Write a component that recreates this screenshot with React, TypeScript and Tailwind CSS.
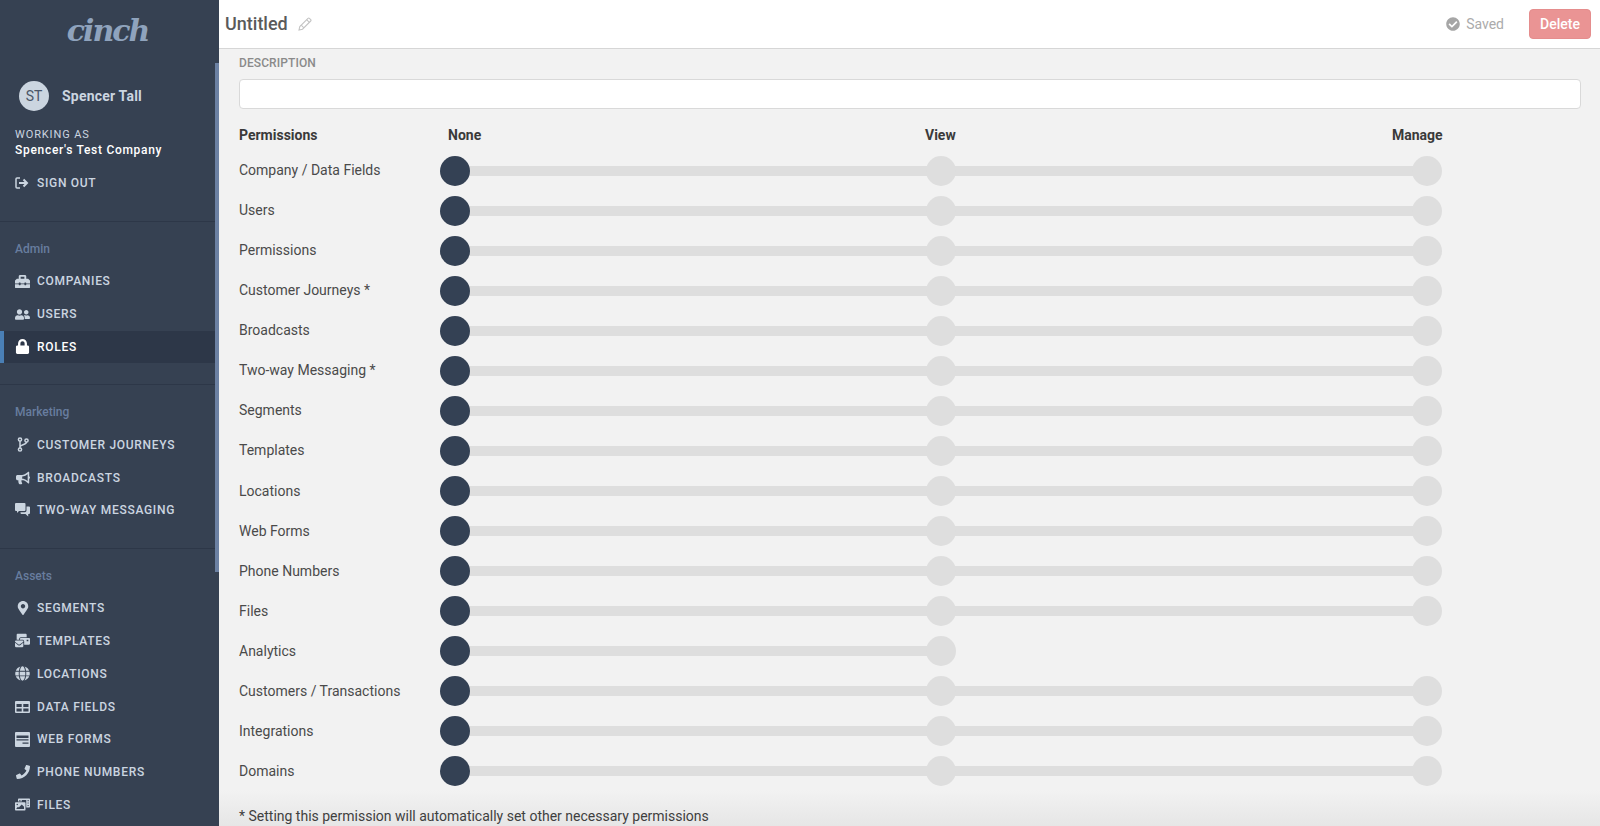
import type { ReactNode } from "react";
import {
  FaBullhorn,
  FaCheckCircle,
  FaGlobe,
  FaLock,
  FaMailBulk,
  FaMapMarkerAlt,
  FaPhone,
  FaPhotoVideo,
  FaToolbox,
  FaUserFriends,
} from "react-icons/fa";

const SignOutIcon = () => (
  <svg width="14" height="12" viewBox="0 0 14 12" fill="none" stroke="currentColor" strokeWidth="1.5">
    <path d="M5 1H2a1 1 0 0 0-1 1v8a1 1 0 0 0 1 1h3" />
    <path d="M4 6h8M8.5 2.5 12 6l-3.5 3.5" strokeWidth="2" />
  </svg>
);

const BranchIcon = () => (
  <svg width="12" height="15" viewBox="0 0 12 15" fill="none" stroke="currentColor" strokeWidth="1.5">
    <circle cx="3" cy="2.5" r="1.6" />
    <circle cx="3" cy="12.5" r="1.6" />
    <circle cx="9.5" cy="3.5" r="1.6" />
    <path d="M3 4v7M9.500 5c0 3-6.500 2.500-6.500 5" />
  </svg>
);

const ChatIcon = () => (
  <svg width="15" height="14" viewBox="0 0 15 14" fill="currentColor">
    <path d="M1 0h8.500a1 1 0 0 1 1 1v6a1 1 0 0 1-1 1H4L2 10V8H1a1 1 0 0 1-1-1V1a1 1 0 0 1 1-1Z" />
    <path d="M11.500 3.500H14a1 1 0 0 1 1 1V10a1 1 0 0 1-1 1h-.800v2.500L10.500 11H6.500a1 1 0 0 1-1-1V9.200h4.200a1.800 1.800 0 0 0 1.800-1.800Z" />
  </svg>
);

const TableIcon = () => (
  <svg width="15" height="12" viewBox="0 0 15 12" fill="currentColor">
    <path d="M1 0h13a1 1 0 0 1 1 1v10a1 1 0 0 1-1 1H1a1 1 0 0 1-1-1V1a1 1 0 0 1 1-1Zm.5 3v3h5.200V3Zm6.800 0v3h5.200V3Zm-6.800 4.500v3h5.200v-3Zm6.800 0v3h5.200v-3Z" fillRule="evenodd" />
  </svg>
);

const FormIcon = () => (
  <svg width="15" height="15" viewBox="0 0 15 15" fill="currentColor">
    <path d="M1 0h13a1 1 0 0 1 1 1v13a1 1 0 0 1-1 1H1a1 1 0 0 1-1-1V1a1 1 0 0 1 1-1Zm.5 3.500V6h12V3.500Zm0 3.700v1.300h12V7.200Zm6 3.300v1.300h6v-1.300Z" fillRule="evenodd" />
  </svg>
);

const PencilIcon = () => (
  <svg width="14" height="14" viewBox="0 0 14 14" fill="none" stroke="#c4c4c4" strokeWidth="1.100">
    <path d="M1 13l.8-3.500L10 1.300a1 1 0 0 1 1.400 0l1.300 1.300a1 1 0 0 1 0 1.400L4.500 12.200 1 13Z" />
    <path d="M8.600 2.700l2.700 2.700M3.200 8.100l2.700 2.700" />
  </svg>
);

const adminItems: [string, ReactNode, boolean?][] = [
  ["COMPANIES", <FaToolbox size={15} />],
  ["USERS", <FaUserFriends size={15} />],
  ["ROLES", <FaLock size={15} />, true],
];

const marketingItems: [string, ReactNode][] = [
  ["CUSTOMER JOURNEYS", <BranchIcon />],
  ["BROADCASTS", <FaBullhorn size={14} />],
  ["TWO-WAY MESSAGING", <ChatIcon />],
];

const assetItems: [string, ReactNode][] = [
  ["SEGMENTS", <FaMapMarkerAlt size={14} />],
  ["TEMPLATES", <FaMailBulk size={15} />],
  ["LOCATIONS", <FaGlobe size={15} />],
  ["DATA FIELDS", <TableIcon />],
  ["WEB FORMS", <FormIcon />],
  ["PHONE NUMBERS", <FaPhone size={14} />],
  ["FILES", <FaPhotoVideo size={15} />],
];

const permissions = [
  "Company / Data Fields",
  "Users",
  "Permissions",
  "Customer Journeys *",
  "Broadcasts",
  "Two-way Messaging *",
  "Segments",
  "Templates",
  "Locations",
  "Web Forms",
  "Phone Numbers",
  "Files",
  "Analytics",
  "Customers / Transactions",
  "Integrations",
  "Domains",
];

const NavItem = ({ label, icon, active }: { label: string; icon: ReactNode; active?: boolean }) => (
  <div
    className={`flex h-[32.8px] items-center border-l-4 pl-[11px] text-[12px] font-medium tracking-[0.7px] ${
      active ? "border-[#4a7fb5] bg-[#2d3748] text-white" : "border-transparent text-[#cbd5e0]"
    }`}
  >
    <span className="flex w-[22px] shrink-0 justify-center pr-[7px]">{icon}</span>
    {label}
  </div>
);

const NavSection = ({ title, children }: { title: string; children: ReactNode }) => (
  <div className="border-b border-[#2d3748] pt-[18px] pb-[21px] last:border-b-0">
    <div className="mb-[7px] h-[18px] pl-[15px] text-[12px] leading-[18px] font-medium text-[#687d9f]">{title}</div>
    {children}
  </div>
);

const Sidebar = () => (
  <aside className="relative flex h-full w-[219px] shrink-0 flex-col overflow-hidden bg-[#364152]">
    <div className="absolute top-[63px] right-0 h-[509px] w-[4px] bg-[#6c81a3]" />
    <div className="w-[215px]">
      <div className="flex h-[60px] items-center justify-center font-['DejaVu_Serif',serif] text-[30px] font-bold tracking-[-2px] text-[#8fa3bd] italic">
        cinch
      </div>
      <div className="mt-[21px] flex items-center pl-[19px]">
        <div className="flex h-[30px] w-[30px] items-center justify-center rounded-full bg-[#cbd5e0] text-[14px] text-[#4a5568]">
          ST
        </div>
        <span className="ml-[13px] text-[14px] font-bold tracking-[0.2px] text-[#cbd5e0]">Spencer Tall</span>
      </div>
      <div className="mt-[16px] pl-[15px] text-[11px] leading-[15px] tracking-[0.9px] text-[#cbd5e0]">WORKING AS</div>
      <div className="mt-[1px] pl-[15px] text-[12px] leading-[15px] font-medium tracking-[0.7px] text-white">
        Spencer's Test Company
      </div>
      <div className="mt-[16px] flex h-[18px] items-center pl-[15px] text-[12px] font-medium tracking-[0.7px] text-[#cbd5e0]">
        <span className="w-[22px]">
          <SignOutIcon />
        </span>
        SIGN OUT
      </div>
      <div className="mt-[29px] border-b border-[#2d3748]" />
      <NavSection title="Admin">
        {adminItems.map(([label, icon, active]) => (
          <NavItem key={label} label={label} icon={icon} active={active} />
        ))}
      </NavSection>
      <NavSection title="Marketing">
        {marketingItems.map(([label, icon]) => (
          <NavItem key={label} label={label} icon={icon} />
        ))}
      </NavSection>
      <NavSection title="Assets">
        {assetItems.map(([label, icon]) => (
          <NavItem key={label} label={label} icon={icon} />
        ))}
      </NavSection>
    </div>
  </aside>
);

const Slider = ({ steps }: { steps: number }) => (
  <div className={`relative flex items-center justify-between ${steps === 3 ? "w-[1002px]" : "w-[516px]"}`}>
    <div className="absolute inset-x-[15px] top-[10px] h-[10px] bg-[#dedede]" />
    <div className="relative h-[30px] w-[30px] rounded-full bg-[#344154]" />
    <div className="relative h-[30px] w-[30px] rounded-full bg-[#dedede]" />
    {steps === 3 && <div className="relative h-[30px] w-[30px] rounded-full bg-[#dedede]" />}
  </div>
);

const App = () => {
  return (
    <div className="flex h-screen w-full overflow-hidden bg-[#f2f2f2] font-['Roboto',sans-serif]">
      <Sidebar />
      <main className="relative flex min-w-0 flex-1 flex-col">
        <header className="flex h-[49px] shrink-0 items-center border-b border-[#d6d6d6] bg-white pr-[9px] pl-[6px]">
          <h1 className="-mt-[2px] text-[18px] font-medium text-[#5a5a5a]">Untitled</h1>
          <span className="ml-[10px]">
            <PencilIcon />
          </span>
          <div className="ml-auto flex items-center text-[14px] text-[#ababab]">
            <FaCheckCircle size={14} className="text-[#a6a6a6]" />
            <span className="ml-[6px]">Saved</span>
          </div>
          <button className="ml-[25px] h-[30px] w-[62px] rounded-[4px] border border-[#e58d8d] bg-[#ea9494] text-[14px] font-medium text-white">
            Delete
          </button>
        </header>

        <div className="pointer-events-none absolute inset-x-0 bottom-0 h-[36px] bg-gradient-to-b from-transparent to-[#e6e6e6]" />

        <div className="relative pr-[19px] pl-[20px]">
          <div className="mt-[6px] text-[12px] leading-[16px] font-medium tracking-[0.1px] text-[#8a8a8a]">DESCRIPTION</div>
          <input className="mt-[8px] block h-[30px] w-full rounded-[4px] border border-[#d9d9d9] bg-white" />

          <div className="mt-[18px] flex text-[14px] leading-[16px] font-bold text-[#3a3a3a]">
            <span className="w-[209px]">Permissions</span>
            <span className="w-[477px]">None</span>
            <span className="w-[467px]">View</span>
            <span>Manage</span>
          </div>

          <div className="mt-[12.5px] flex flex-col gap-[10.07px]">
            {permissions.map((name) => (
              <div key={name} className="flex h-[30px] items-center text-[14px] text-[#4a4a4a]">
                <span className="w-[201px] shrink-0">{name}</span>
                <Slider steps={name === "Analytics" ? 2 : 3} />
              </div>
            ))}
          </div>

          <p className="mt-[20.5px] text-[14px] leading-[18px] text-[#3f3f3f]">
            * Setting this permission will automatically set other necessary permissions
          </p>
        </div>
      </main>
    </div>
  );
};

export default App;
